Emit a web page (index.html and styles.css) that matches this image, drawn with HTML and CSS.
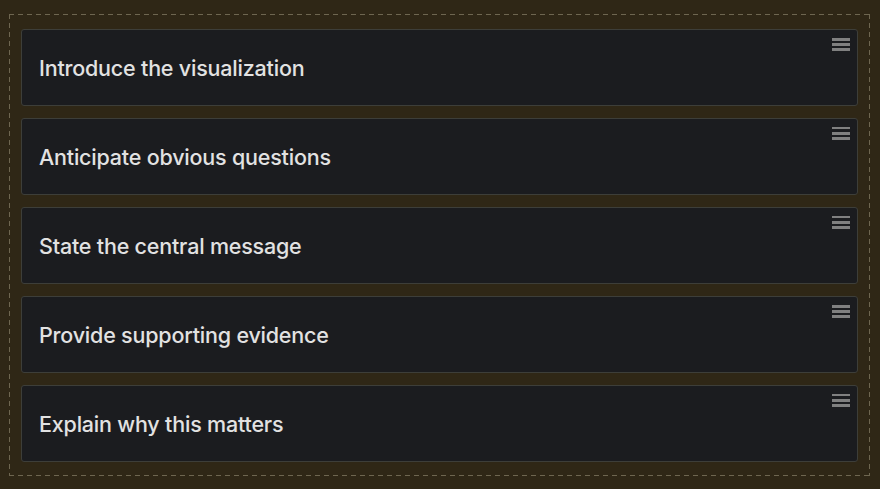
FILE: index.html
```html
<!DOCTYPE html>
<html>
<head>
<meta charset="utf-8">
<link rel="stylesheet" href="styles.css">
</head>
<body>
<div class="board">
  <div class="item"><span class="label">Introduce the visualization</span><span class="handle"></span></div>
  <div class="item"><span class="label">Anticipate obvious questions</span><span class="handle"></span></div>
  <div class="item"><span class="label">State the central message</span><span class="handle"></span></div>
  <div class="item"><span class="label">Provide supporting evidence</span><span class="handle"></span></div>
  <div class="item"><span class="label">Explain why this matters</span><span class="handle"></span></div>
</div>
</body>
</html>
```
FILE: styles.css
```css
html, body {
  margin: 0;
  padding: 0;
  background: #2f2716;
  height: 100%;
}
body {
  padding: 14px 10px 12px 9px;
  box-sizing: border-box;
}
.board {
  padding: 15px 12px 14px 12px;
  display: flex;
  flex-direction: column;
  gap: 12px;
  background:
    repeating-linear-gradient(90deg, #6e6650 0 5px, transparent 5px 9px) top left / 100% 1px no-repeat,
    repeating-linear-gradient(90deg, #6e6650 0 5px, transparent 5px 9px) bottom left / 100% 1px no-repeat,
    repeating-linear-gradient(180deg, #6e6650 0 5px, transparent 5px 9px) top left / 1px 100% no-repeat,
    repeating-linear-gradient(180deg, #6e6650 0 5px, transparent 5px 9px) top right / 1px 100% no-repeat;
}
.item {
  position: relative;
  height: 77px;
  box-sizing: border-box;
  background: #1b1c1f;
  border: 1px solid #3d3e39;
  border-radius: 3px;
  display: flex;
  align-items: center;
  padding-left: 17px;
}
.label {
  font-family: "Inter", sans-serif;
  font-weight: 500;
  font-size: 21.5px;
  letter-spacing: -0.2px;
  color: #e2e2e2;
}
.handle {
  position: absolute;
  top: 8px;
  right: 7px;
  width: 18px;
  height: 13px;
  background: linear-gradient(#808080 0 2.5px, transparent 2.5px 5.25px, #808080 5.25px 7.75px, transparent 7.75px 10.5px, #808080 10.5px 13px);
}
```
